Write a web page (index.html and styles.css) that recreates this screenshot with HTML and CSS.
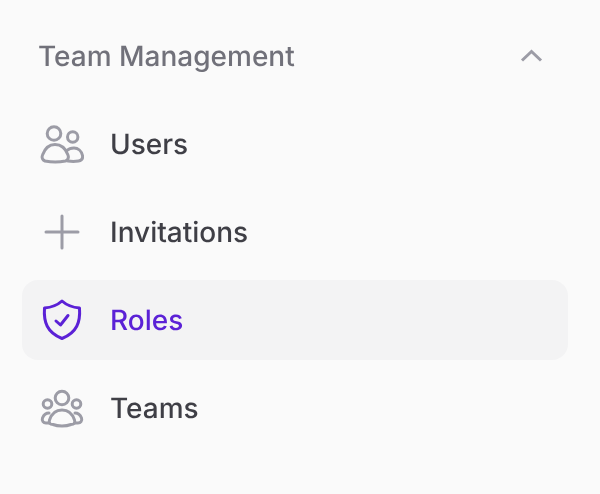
FILE: index.html
```html
<!DOCTYPE html>
<html lang="en">
<head>
<meta charset="utf-8">
<title>Team Management</title>
<link rel="stylesheet" href="styles.css">
</head>
<body>
<nav class="nav">
  <div class="head">
    <span>Team Management</span>
    <svg class="chev" width="24" height="16" viewBox="0 0 24 16"><path d="M2 12.500L11.500 3.500L21 12.500"/></svg>
  </div>
  <ul class="list">
    <li class="row">
      <svg class="ico" width="44" height="44" viewBox="0 0 44 44">
        <circle cx="14" cy="11.500" r="6.800"/>
        <circle cx="32.700" cy="15" r="5.200"/>
        <path d="M5 39C2.500 38 1.500 35.500 2.500 33C5 26 9.500 22.500 15 22.500C20.500 22.500 25.500 26 28 33C29 35.500 28 38 25.500 39C18.500 40.500 12 40.500 5 39Z"/>
        <path d="M27 28.500C28.500 27 31 26 34 26C38 26 41.500 29 42.500 33.500C43 36.500 41.500 38.500 38.500 39C35.500 39.500 31 39.500 28 39"/>
      </svg>
      <span>Users</span>
    </li>
    <li class="row">
      <svg class="ico" width="44" height="44" viewBox="0 0 44 44"><path d="M6 22H38M22 6V38"/></svg>
      <span>Invitations</span>
    </li>
    <li class="row active">
      <svg class="ico" width="44" height="44" viewBox="0 0 44 44">
        <path d="M22 3C17 7.500 11 9.500 4.500 10C3.500 24 7 34.500 22 40.500C37 34.500 40.500 24 39.500 10C33 9.500 27 7.500 22 3Z"/>
        <path d="M16 23L20.500 27L28 17.500"/>
      </svg>
      <span>Roles</span>
    </li>
    <li class="row">
      <svg class="ico" width="44" height="44" viewBox="0 0 44 44">
        <circle cx="22" cy="12" r="6.800"/>
        <circle cx="7.500" cy="18" r="4.300"/>
        <circle cx="36.500" cy="18" r="4.300"/>
        <path d="M13 38.500C10 38.500 8.500 37 9.500 34C11.500 28 16 24 22 24C28 24 32.500 28 34.500 34C35.500 37 34 38.500 31 38.500C26 40.500 18 40.500 13 38.500Z"/>
        <path d="M9 27C5.500 27 3.500 29.500 2.500 32C1.500 35 3.500 37 6 37H9.500"/>
        <path d="M35 27C38.500 27 40.500 29.500 41.500 32C42.500 35 40.500 37 38 37H34.500"/>
      </svg>
      <span>Teams</span>
    </li>
  </ul>
</nav>
</body>
</html>
```

FILE: styles.css
```css
* { box-sizing: border-box; }
html, body { margin: 0; height: 100%; }
body {
  background: #fafafa;
  font-family: Inter, "Liberation Sans", sans-serif;
  text-rendering: geometricPrecision;
  overflow: hidden;
}
.nav {
  width: 546px;
  margin-left: 22px;
  padding-top: 24px;
  will-change: transform;
}
.head {
  height: 64px;
  padding: 0 24px 0 16px;
  display: flex;
  align-items: center;
  justify-content: space-between;
  font-size: 28px;
  font-weight: 500;
  color: #71717a;
}
.chev { fill: none; stroke: #9c9ca6; stroke-width: 3; }
.list {
  list-style: none;
  margin: 16px 0 0;
  padding: 0;
  display: flex;
  flex-direction: column;
  gap: 8px;
}
.row {
  height: 80px;
  padding-left: 18px;
  border-radius: 16px;
  display: flex;
  align-items: center;
  gap: 26px;
  font-size: 28px;
  font-weight: 500;
  color: #3f3f46;
}
.ico {
  flex: none;
  fill: none;
  stroke: #9c9ca6;
  stroke-width: 3;
  stroke-linecap: round;
  stroke-linejoin: round;
}
.active { background: #f3f3f4; color: #5b21d6; }
.active .ico { stroke: #5b21d6; }
```
